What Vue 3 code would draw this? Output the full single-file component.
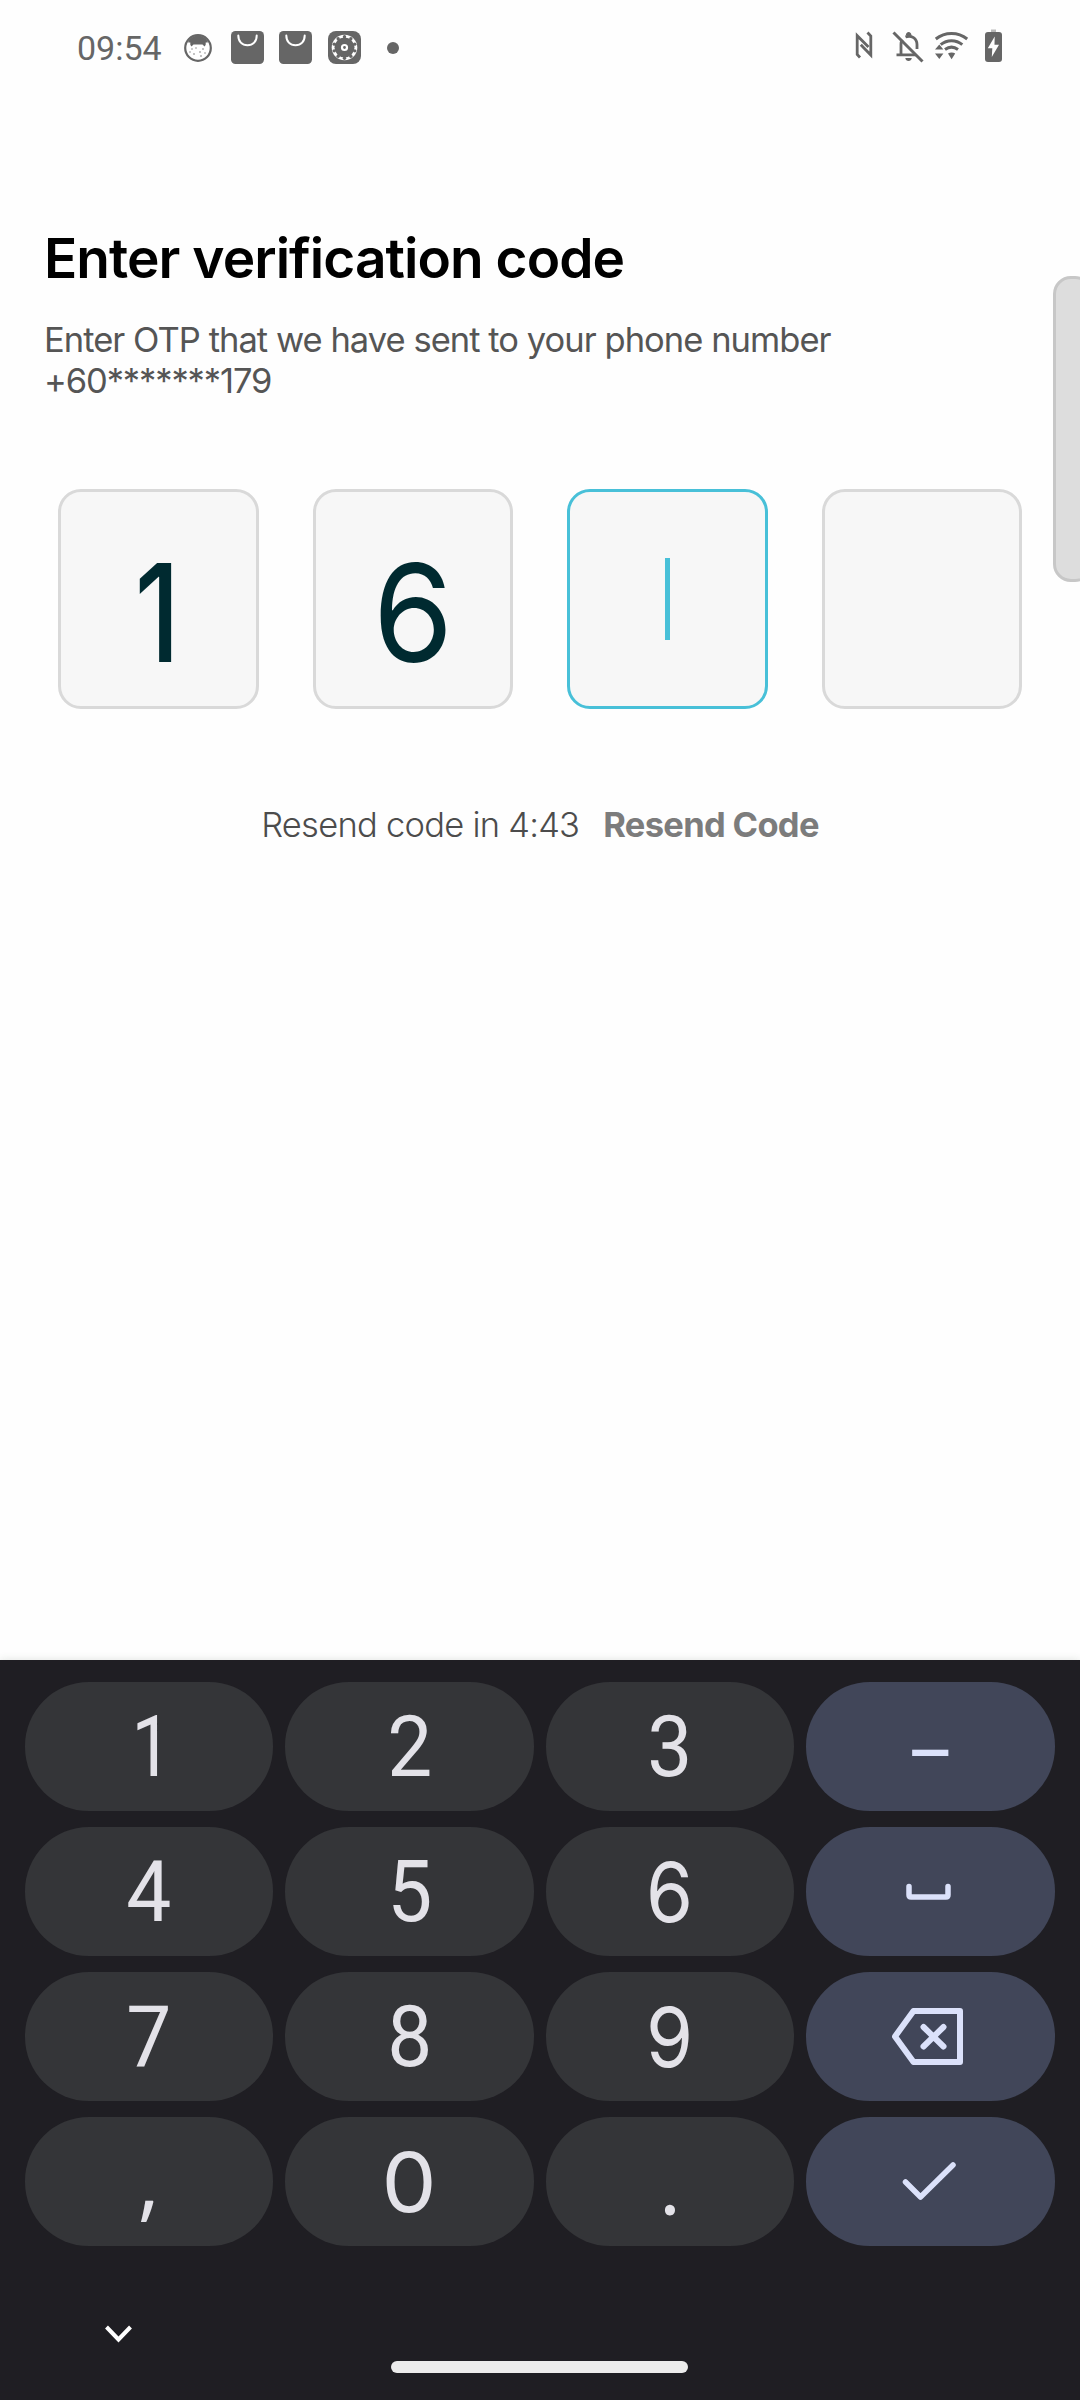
<script setup>
const code = ['1', '6', null, '']
const keys = [
  { t: '1', kind: 'one' }, { t: '2' }, { t: '3' }, { t: '–', fn: true, kind: 'open' },
  { t: '4' }, { t: '5' }, { t: '6', kind: 'inter' }, { icon: 'space', fn: true },
  { t: '7' }, { t: '8' }, { t: '9', kind: 'inter' }, { icon: 'back', fn: true },
  { t: ',', kind: 'open' }, { t: '0', kind: 'inter zero' }, { t: '.', kind: 'lato' }, { icon: 'check', fn: true },
]
const scallops = Array.from({ length: 10 }, (_, i) => {
  const a = ((i + 0.5) * Math.PI) / 5
  return { x: 16.5 + 10.8 * Math.cos(a), y: 16.5 + 10.8 * Math.sin(a) }
})
</script>

<template>
  <main class="screen">
    <header class="status">
      <span class="time">09:54</span>
      <svg class="face" width="28" height="28" viewBox="0 0 28 28">
        <circle cx="14" cy="14" r="12.8" fill="#fff" stroke="#666" stroke-width="2.2" />
        <path d="M4 8C6 4 10 1.5 14 1.5S22 4 24 8L20.500 12.500 18.500 10.500H9.500L7.500 12.500Z" fill="#666" />
        <path d="M5.300 8.500v3M22.700 8.500v3" stroke="#fff" stroke-width="2" />
        <g fill="#777">
          <circle cx="8" cy="15" r=".7" /><circle cx="12" cy="14" r=".7" /><circle cx="19" cy="15" r=".8" />
          <circle cx="16" cy="18" r=".8" /><circle cx="10" cy="20" r=".8" /><circle cx="17" cy="22" r=".8" />
          <circle cx="6" cy="18" r=".7" /><circle cx="21" cy="19" r=".7" />
        </g>
      </svg>
      <svg v-for="n in 2" :key="n" :class="'bag bag' + n" width="33" height="33" viewBox="0 0 33 33">
        <rect width="33" height="33" rx="4.5" fill="#666" />
        <path d="M7.3 4.5C7.3 10.5 11 14.3 16.5 14.3S25.7 10.5 25.7 4.5" fill="none" stroke="#fff" stroke-width="2" stroke-linecap="round" />
      </svg>
      <svg class="gear" width="33" height="33" viewBox="0 0 33 33">
        <rect width="33" height="33" rx="8" fill="#666" />
        <circle cx="16.5" cy="16.5" r="12.800" fill="#fff" />
        <circle cx="16.5" cy="16.5" r="10" fill="#666" />
        <circle v-for="(s, i) in scallops" :key="i" :cx="s.x" :cy="s.y" r="1.700" fill="#666" />
        <circle cx="16.5" cy="16.5" r="2.5" fill="#666" stroke="#fff" stroke-width="2.200" />
      </svg>
      <i class="more"></i>
      <svg class="sys" width="150" height="36" viewBox="0 0 150 36" fill="none" stroke="#666">
        <path d="M5 28.5 2.2 25.5V6.7L13.5 18" stroke-width="2.8" />
        <path d="M12.5 3.5 15.8 7V26L5.8 15.8" stroke-width="2.8" />
        <path d="M38.5 3.5 67.5 32.5" stroke-width="3" />
        <path d="M41.5 25.8H61M46 25V15.5C46 13.5 46.5 12 47.3 10.8" stroke-width="2.8" />
        <path d="M50.5 8C56.5 5.6 62 9.5 62 15.5V20" stroke-width="2.8" />
        <path d="M50.8 6.5C50.8 1.8 56.5 1.8 56.5 6.5ZM50.3 29H56.8C56.5 33 50.6 33 50.3 29Z" fill="#666" stroke="none" />
        <path d="M80.8 10C90 2.6 103 2.6 112.2 10" stroke-width="3" />
        <path d="M85.7 15.6C92 10.4 101 10.4 107.3 15.6" stroke-width="3" />
        <path d="M90 20.5C94 17.6 99 17.6 103 20.5" stroke-width="3" />
        <path d="M80 20.5 84.3 15.5 88.4 20.5ZM80 24.5H88.4L84.3 30ZM93 24.6C95 23 98.3 23 100.2 24.6L96.6 30.3Z" fill="#666" stroke="none" />
        <rect x="136" y="0.5" width="5" height="3" fill="#bbb" stroke="none" />
        <rect x="130" y="3" width="17" height="30" rx="3" fill="#666" stroke="none" />
        <path d="M139.7 7.5 132.8 19.2H137.3L136.8 28 144 15.8H139.5Z" fill="#fff" stroke="none" />
      </svg>
    </header>

    <section class="content">
      <h1>Enter verification code</h1>
      <p class="sub">Enter OTP that we have sent to your phone number<br /><span>+60*******179</span></p>
      <div class="otp">
        <div v-for="(d, i) in code" :key="i" class="cell" :class="{ active: d === null, one: d === '1' }">
          <i v-if="d === null" class="caret"></i>
          <span v-else>{{ d }}</span>
        </div>
      </div>
      <div class="resend"><span class="wait">Resend code in 4:43</span><b>Resend Code</b></div>
    </section>
    <div class="edge"></div>

    <footer class="keyboard">
      <div class="keys">
        <div v-for="(k, i) in keys" :key="i" class="key" :class="[{ fn: k.fn }, k.kind]">
          <span v-if="k.t">{{ k.t }}</span>
          <svg v-else width="80" height="64" viewBox="0 0 80 64" fill="none" stroke="#dbe1fa" stroke-width="6" stroke-linecap="round" stroke-linejoin="round">
            <path v-if="k.icon === 'space'" d="M20 26.5V35Q20 37 22 37H57Q59 37 59 35V26.5" stroke-width="5.5" />
            <g v-else-if="k.icon === 'back'">
              <path d="M6 31.500 24.5 6H71V57H24.5Z" />
              <path d="M34.5 22 54.5 41.500M54.5 22 34.5 41.500" />
            </g>
            <path v-else d="M16.500 32 31.500 47 64 15" stroke-width="5.500" />
          </svg>
        </div>
      </div>
      <div class="nav">
        <svg class="hide" width="30" height="20" viewBox="0 0 30 20" fill="none" stroke="#fff" stroke-width="4"><path d="M2.500 3 14.500 15.500 26.500 3" /></svg>
        <i class="home"></i>
      </div>
    </footer>
  </main>
</template>

<style>
body { background: #fefefe; }
</style>

<style scoped>
* { box-sizing: border-box; }
.screen { position: relative; width: 1080px; height: 2400px; display: flex; flex-direction: column; overflow: hidden; background: #fefefe; font-family: Inter, sans-serif; }
svg { display: block; flex: none; }
.status { height: 96px; flex: none; display: flex; align-items: center; padding: 0 75px 1px 77px; }
.time { width: 107px; font: 400 34px/40px Roboto, sans-serif; color: #666; }
.bag1 { margin-left: 19px; }
.bag2 { margin-left: 15px; }
.gear { margin-left: 16px; }
.more { width: 12px; height: 12px; margin: 0 0 0 26px; border-radius: 50%; background: #666; }
.sys { margin-left: auto; margin-top: -2px; }
.content { flex: 1; padding: 129px 58px 0; }
h1 { margin: 0 0 28px -14px; font-size: 55px; line-height: 66px; font-weight: 600; letter-spacing: -0.95px; color: #000; white-space: nowrap; }
.sub { margin: 0 0 88px -14px; font-size: 34.5px; line-height: 41px; letter-spacing: -0.96px; color: #555; white-space: nowrap; }
.sub span { letter-spacing: -1.1px; }
.otp { display: flex; justify-content: space-between; }
.cell { width: 200.5px; height: 220px; border: 3px solid #d9d9d9; border-radius: 23px; background: #f7f7f7; display: flex; align-items: center; justify-content: center; color: #002a30; font-size: 136px; line-height: 160px; }
.cell span { padding-top: 27px; transform: scaleX(0.95); }
.cell.one span { transform: translateX(-1px) scaleX(0.8); font-weight: 500; }
.active { border-color: #48c0d8; }
.caret { width: 5px; height: 82px; background: #48c0d8; }
.resend { display: flex; justify-content: center; align-items: center; margin-top: 95px; line-height: 42px; font-size: 34.5px; white-space: nowrap; }
.wait { font-weight: 300; letter-spacing: -0.75px; color: #4c4c4c; }
b { margin-left: 24px; font-weight: 700; letter-spacing: -0.68px; color: #7c7c7c; }
.edge { position: absolute; left: 1053px; top: 276px; width: 40px; height: 306px; border: 3px solid #c7c7c7; border-radius: 18px; background: #ddd; }
.keyboard { height: 740px; flex: none; display: flex; flex-direction: column; padding-top: 22px; background: #1f1e23; box-shadow: 0 0 8px rgba(60, 80, 60, 0.16); }
.keys { display: grid; grid-template-columns: repeat(4, 1fr); grid-auto-rows: 129px; gap: 16px 12px; padding: 0 25.5px 0 24.5px; }
.key { display: flex; align-items: center; justify-content: center; border-radius: 64px; background: #343538; color: #e3e2e8; font: 400 84.4px/100px Roboto, sans-serif; }
.key span { padding-top: 2px; transform: scaleX(0.95); }
.key.one span { transform: translateX(3px) scaleX(0.85); }
.key.inter { font-family: Inter, sans-serif; font-size: 82.5px; }
.key.inter span { padding-top: 0; transform: scaleX(0.92); }
.key.zero span { transform: scaleX(1.06); }
.key.open { font-family: "Open Sans", sans-serif; font-size: 86px; }
.key.open span { margin-top: -9px; transform: none; }
.key.lato { font-family: Lato, sans-serif; }
.key.fn { background: #414659; color: #dbe1fa; }
.key svg { margin-right: 2px; }
.nav { flex: 1; display: flex; align-items: flex-start; }
.hide { margin: 78px 0 0 104px; }
.home { width: 297px; height: 12px; margin: 115px 0 0 257px; border-radius: 6px; background: #ececec; }
</style>
